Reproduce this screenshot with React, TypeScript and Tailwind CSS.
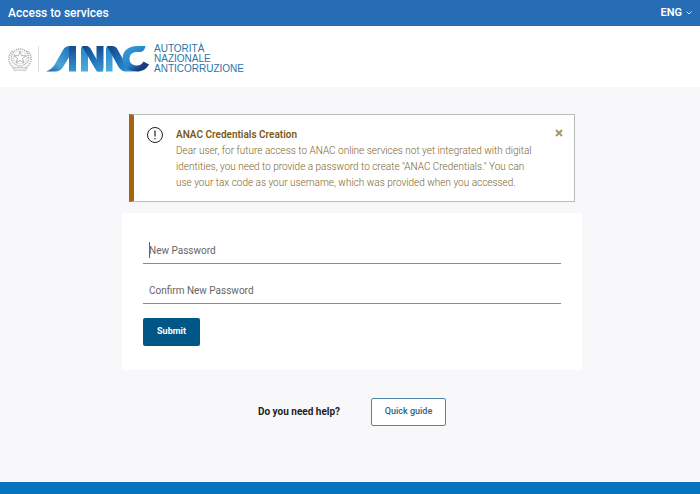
import { useState } from 'react';
import type { FormEvent } from 'react';

function Emblem() {
    return (
        <svg viewBox="0 0 24 26" className="w-6 h-[26px] shrink-0" fill="none" stroke="#a9a9a9" aria-hidden="true">
            <circle cx="12" cy="11.500" r="8.500" strokeWidth="1.4" strokeDasharray="1.2 0.9" />
            <circle cx="12" cy="11.500" r="6.500" strokeWidth="0.4" />
            <path d="M12 5.500l1.600 4.200 4.500.1-3.600 2.800 1.400 4.400-3.900-2.600-3.900 2.600 1.400-4.400-3.600-2.800 4.500-.1z" fill="#fff" strokeWidth="0.9" />
            <path d="M4.500 5C.8 8-.2 13.500 2.500 18c1.600 2.700 4 4.500 7.500 5" strokeWidth="1.800" strokeDasharray="1.3 0.9" stroke="#bababa" />
            <path d="M19.500 5C23.200 8 24.200 13.500 21.500 18c-1.600 2.700-4 4.500-7.500 5" strokeWidth="1.800" strokeDasharray="1.3 0.9" stroke="#bababa" />
            <path d="M5 22.500c4-1.500 10-1.500 14 0l-1.500 2.500c-3-1-8-1-11 0z" fill="#ececec" strokeWidth="0.5" />
        </svg>
    );
}

function AnacMark() {
    return (
        <svg viewBox="0 0 104 26" className="w-[104px] h-[26px] shrink-0" role="img" aria-label="ANAC">
            <defs>
                <linearGradient id="tail" x1="0" y1="1" x2="1" y2="0">
                    <stop offset="0" stopColor="#1b5ca5" />
                    <stop offset="0.35" stopColor="#4ba4dc" />
                    <stop offset="1" stopColor="#1765ae" />
                </linearGradient>
                <linearGradient id="down" x1="0" y1="0" x2="0" y2="1">
                    <stop offset="0" stopColor="#17488f" />
                    <stop offset="1" stopColor="#3597d6" />
                </linearGradient>
                <linearGradient id="up" x1="0" y1="0" x2="0" y2="1">
                    <stop offset="0" stopColor="#2183c8" />
                    <stop offset="1" stopColor="#4fabe0" />
                </linearGradient>
                <linearGradient id="slope" x1="0" y1="0" x2="1" y2="1">
                    <stop offset="0" stopColor="#153f83" />
                    <stop offset="0.5" stopColor="#1c6fb8" />
                    <stop offset="1" stopColor="#389bd8" />
                </linearGradient>
                <linearGradient id="arc" x1="0" y1="0" x2="1" y2="1">
                    <stop offset="0" stopColor="#3f9fda" />
                    <stop offset="0.5" stopColor="#2384ca" />
                    <stop offset="0.75" stopColor="#1a3f86" />
                    <stop offset="1" stopColor="#16306f" />
                </linearGradient>
            </defs>
            <path d="M0 25.500C4 24 6.500 22 8.500 19L17 4C19 1 20.500 0 24 0H30L17 21C14.500 24.500 12.500 25.500 9 25.500Z" fill="url(#tail)" />
            <path d="M23 3C23 1 24 0 26 0H30V25.500H23Z" fill="url(#down)" />
            <path d="M35 3C35 1 36 0 38 0H42V25.500H35Z" fill="url(#up)" />
            <path d="M50.500 0H57.500V22C57.500 24.500 56.500 25.500 54.500 25.500H50.500Z" fill="url(#down)" />
            <path d="M36 0H40C42 0 43.500 1 44.500 2.500L57.500 25.500H54C51.500 25.500 50 24.500 49 22.500Z" fill="url(#slope)" />
            <path d="M60 3C60 1 61 0 63 0H66.500V25.500H60Z" fill="url(#up)" />
            <path d="M61 0H66C68.500 0 70 1 71 2.500L79 17C81 20.500 84 23.500 88 25.500H81C76 25.500 74 23.500 72 20Z" fill="url(#slope)" />
            <path d="M99.500 0H91C82.500 0 76.500 5 76.500 12.500C76.500 20.500 82.500 25.500 90.500 25.500C96.500 25.500 100.500 23 103 18.500L97.500 15.500C96 18 94 19.500 91 19.500C86.500 19.500 83.500 17 83.500 13C83.500 8.500 86.500 6 91 6H94C97 6 98.500 4 99.500 0Z" fill="url(#arc)" />
        </svg>
    );
}

function AlertBox({ onClose }: { onClose: () => void }) {
    return (
        <section
            role="alert"
            className="flex items-start w-full max-w-[446px] border border-[#b9babd] border-l-5 border-l-[#a3650f] bg-white pt-[11px] pb-[10px] pl-3 pr-[10px] text-[#7d652c]"
        >
            <svg viewBox="0 0 18 18" className="w-[18px] h-[18px] shrink-0 text-[#222]" fill="none" stroke="currentColor" aria-hidden="true">
                <circle cx="9" cy="9" r="7.500" />
                <path d="M9 4.500v6" strokeWidth="1.200" />
                <circle cx="9" cy="12.800" r="0.700" fill="currentColor" stroke="none" />
            </svg>
            <div className="flex-1 pt-px pl-3">
                <h2 className="text-[10px] leading-4 font-semibold text-[#7a5a17]">ANAC Credentials Creation</h2>
                <p className="max-w-[365px] text-[10px] leading-4 font-light">
                    Dear user, for future access to ANAC online services not yet integrated with digital identities, you
                    need to provide a password to create "ANAC Credentials." You can use your tax code as your username,
                    which was provided when you accessed.
                </p>
            </div>
            <button type="button" aria-label="Close" onClick={onClose} className="mt-[2px] cursor-pointer">
                <svg viewBox="0 0 10 10" className="w-[10px] h-[10px]" fill="none" stroke="#aa9868" strokeWidth="2">
                    <path d="M2 2l6 6M8 2l-6 6" />
                </svg>
            </button>
        </section>
    );
}

type FieldProps = {
    id: string;
    label: string;
    value: string;
    onChange: (value: string) => void;
    caret?: boolean;
};

function PasswordField({ id, label, value, onChange, caret }: FieldProps) {
    return (
        <div className="relative grid h-7 border-b border-[#8b8b8f]">
            {/* the label rests in the same cell as the input until something is typed */}
            {!value && (
                <label htmlFor={id} className="col-start-1 row-start-1 self-center pt-[2px] pl-[6px] text-[10px] leading-4 text-[#666]">
                    {label}
                </label>
            )}
            <input
                id={id}
                type="password"
                aria-label={label}
                value={value}
                onChange={e => onChange(e.target.value)}
                className="col-start-1 row-start-1 w-full bg-transparent px-[6px] text-[10px] outline-none"
            />
            {caret && !value && <span className="absolute left-[6px] top-[6px] w-px h-4 bg-[#666]" />}
        </div>
    );
}

export default function App() {
    const [showAlert, setShowAlert] = useState(true);
    const [password, setPassword] = useState('');
    const [confirm, setConfirm] = useState('');

    function handleSubmit(e: FormEvent) {
        e.preventDefault();
    }

    return (
        <div className="flex flex-col min-h-screen bg-[#f8f8fb] font-['Roboto','Liberation_Sans',sans-serif]">
            <div className="flex items-center justify-between h-[26px] px-2 bg-[#276db5] text-white">
                <span className="text-[12px] leading-4 font-medium">Access to services</span>
                <button type="button" className="flex items-center gap-1 text-[11px] leading-4 font-semibold cursor-pointer">
                    ENG
                    <svg viewBox="0 0 6 6" className="w-[6px] h-[6px]" fill="none" stroke="currentColor" strokeWidth="0.800" aria-hidden="true">
                        <path d="M0.500 1.500L3 4l2.500-2.500" />
                    </svg>
                </button>
            </div>

            <header className="flex items-center h-[61px] px-2 pt-1 bg-white">
                <Emblem />
                <div className="w-px h-[26px] ml-[6px] mr-[7px] bg-[#dedede]" />
                <AnacMark />
                <p className="pl-1 font-['Liberation_Sans',sans-serif] text-[10px] leading-[10px] text-[#2b76a8]">
                    AUTORITÀ
                    <br />
                    NAZIONALE
                    <br />
                    ANTICORRUZIONE
                </p>
            </header>

            <main className="flex flex-col items-center flex-1 pt-[27px] pl-1">
                {showAlert && <AlertBox onClose={() => setShowAlert(false)} />}

                <form onSubmit={handleSubmit} className="flex flex-col gap-3 w-full max-w-[460px] mt-[11px] px-[21px] pt-[23px] pb-6 bg-white">
                    <PasswordField id="new-password" label="New Password" value={password} onChange={setPassword} caret />
                    <PasswordField id="confirm-password" label="Confirm New Password" value={confirm} onChange={setConfirm} />
                    <button
                        type="submit"
                        className="self-start w-[57px] h-7 mt-[2px] rounded-[2px] bg-[#005686] text-[9px] font-bold text-white cursor-pointer"
                    >
                        Submit
                    </button>
                </form>

                <div className="flex items-center gap-[31px] mt-7">
                    <p className="text-[10px] leading-4 font-bold text-[#222]">Do you need help?</p>
                    <a
                        href="#guide"
                        className="flex items-center justify-center w-[75px] h-7 rounded-[2px] border border-[#4f87a6] bg-white text-[9px] font-medium text-[#2f6482]"
                    >
                        Quick guide
                    </a>
                </div>
            </main>

            <footer className="h-3 bg-[#0573bf]" />
        </div>
    );
}
